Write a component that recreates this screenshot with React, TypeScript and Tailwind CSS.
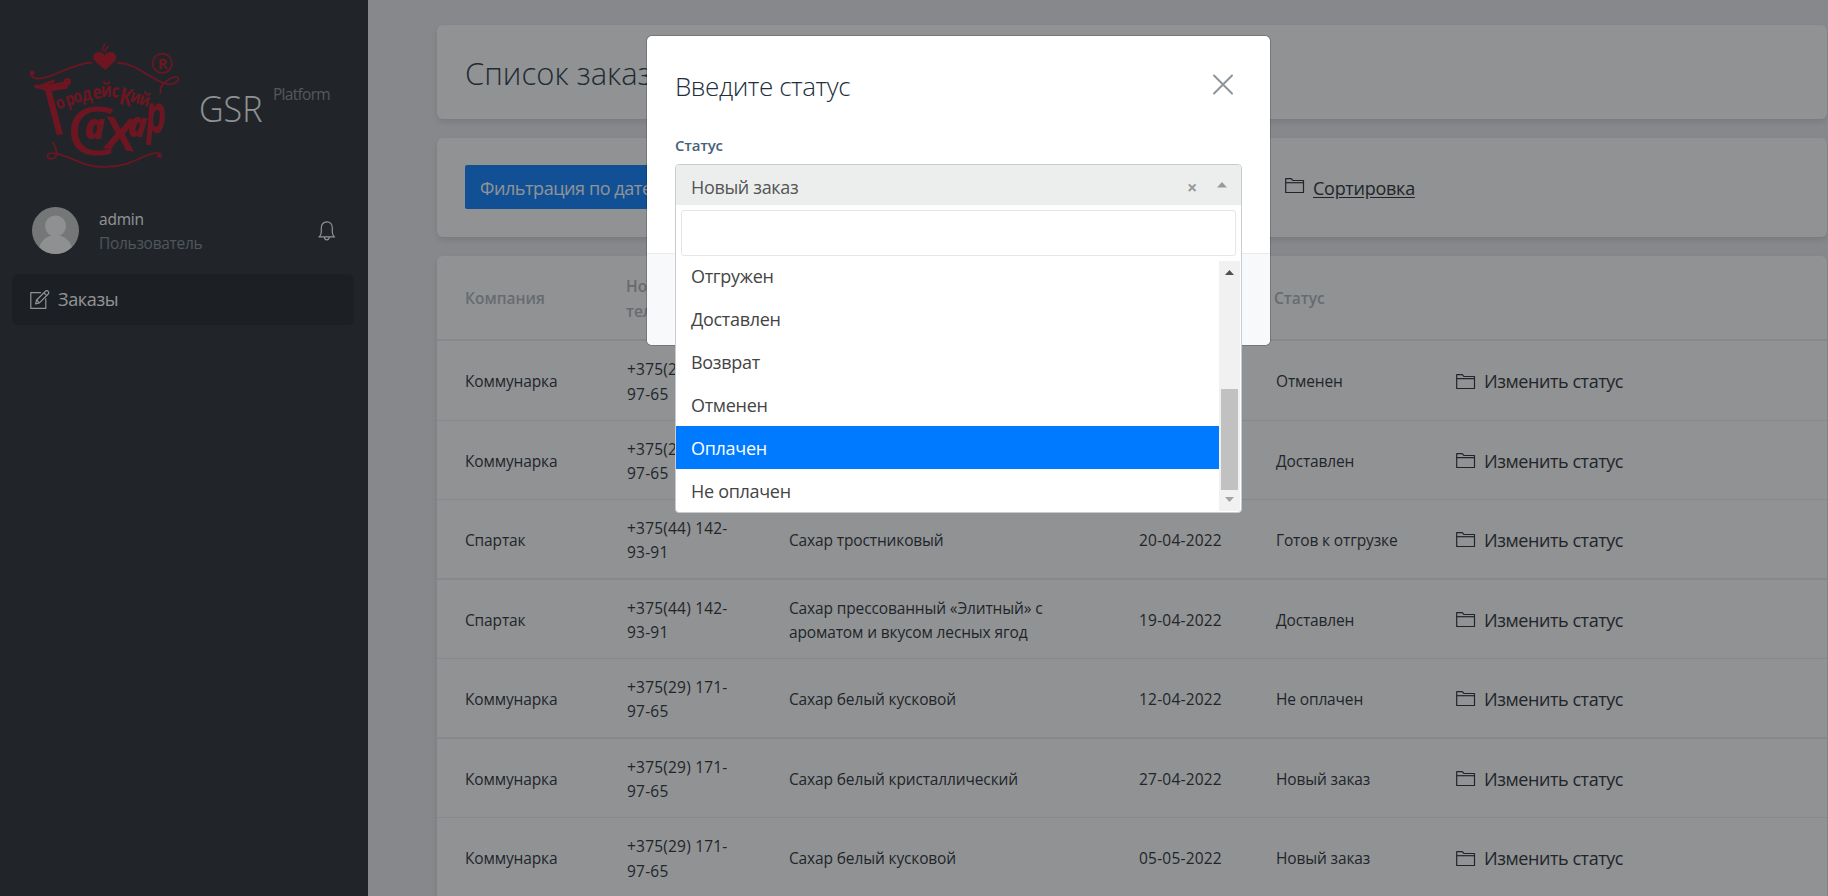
import React from "react";

type Order = {
  company: string;
  phone: string;
  product: string;
  date: string;
  status: string;
  row: string;
};

const orders: Order[] = [
  { company: "Коммунарка", phone: "+375(29) 171-97-65", product: "", date: "", status: "Отменен", row: "h-[80px] border-b" },
  { company: "Коммунарка", phone: "+375(29) 171-97-65", product: "", date: "", status: "Доставлен", row: "h-[79px] border-b" },
  { company: "Спартак", phone: "+375(44) 142-93-91", product: "Сахар тростниковый", date: "20-04-2022", status: "Готов к отгрузке", row: "h-[80px] border-b-2" },
  { company: "Спартак", phone: "+375(44) 142-93-91", product: "Сахар прессованный «Элитный» с ароматом и вкусом лесных ягод", date: "19-04-2022", status: "Доставлен", row: "h-[79px] border-b" },
  { company: "Коммунарка", phone: "+375(29) 171-97-65", product: "Сахар белый кусковой", date: "12-04-2022", status: "Не оплачен", row: "h-[80px] border-b-2" },
  { company: "Коммунарка", phone: "+375(29) 171-97-65", product: "Сахар белый кристаллический", date: "27-04-2022", status: "Новый заказ", row: "h-[79px] border-b" },
  { company: "Коммунарка", phone: "+375(29) 171-97-65", product: "Сахар белый кусковой", date: "05-05-2022", status: "Новый заказ", row: "h-[80px] border-b" },
];

const options = ["Отгружен", "Доставлен", "Возврат", "Отменен", "Оплачен", "Не оплачен"];

function FolderIcon() {
  return (
    <svg width="20" height="16" viewBox="0 0 20 16" fill="none" stroke="currentColor" strokeWidth="1.2" strokeLinejoin="round" className="shrink-0">
      <path d="M.7 14.5V.7h5.6l1.700 1.800h10.500v12z" />
      <path d="M.7 4.700h17.800" />
    </svg>
  );
}

function EditIcon() {
  return (
    <svg width="20" height="20" viewBox="0 0 20 20" fill="none" stroke="currentColor" strokeWidth="1.2" strokeLinejoin="round">
      <path d="M11 2.600H.8v15.800h15V8.600" />
      <path d="M5.600 13.800l1-3.800 8.900-8.700c.9-.9 2-.7 2.700 0s.9 1.800 0 2.700L9.400 12.800z" />
      <path d="M14 2.800l2.800 2.800M6.600 10l2.800 2.800" />
    </svg>
  );
}

function BellIcon() {
  return (
    <svg width="18" height="20" viewBox="0 0 18 20" fill="none" stroke="currentColor" strokeWidth="1.2" strokeLinejoin="round">
      <path d="M1 15.900c1.600-1.200 2.300-2.600 2.300-5V6.900C3.300 3.300 5.600.8 8.800.8s5.500 2.500 5.500 6.100v4c0 2.400.7 3.800 2.300 5z" />
      <path d="M6.300 16.200c.3 1.700 1.200 2.700 2.500 2.700s2.200-1 2.500-2.700" />
    </svg>
  );
}

const logoLetters = [
  { c: "о", x: 176, y: 268, r: -24, s: 52 },
  { c: "р", x: 203, y: 258, r: -18, s: 54 },
  { c: "о", x: 225, y: 249, r: -16, s: 52 },
  { c: "д", x: 249, y: 243, r: -10, s: 56 },
  { c: "е", x: 281, y: 236, r: -6, s: 56 },
  { c: "й", x: 303, y: 230, r: 0, s: 56 },
  { c: "с", x: 334, y: 230, r: 6, s: 56 },
  { c: "К", x: 355, y: 250, r: 12, s: 72 },
  { c: "и", x: 388, y: 243, r: 16, s: 54 },
  { c: "й", x: 415, y: 251, r: 18, s: 54 },
];

function Logo() {
  return (
    <svg width="155" height="129" viewBox="85 65 465 387" fill="none" stroke="#b90519" strokeLinecap="round" strokeLinejoin="round" className="overflow-visible">
      <g strokeWidth="5">
        <path d="M276 127c-70 4-112 48-160 48-20 0-25-12-20-20" />
        <path d="M354 127c60 4 90 44 140 62 24 9 48-6 41-17-9-9-30 6-40 15-12 10-15 20-12 31" />
        <path d="M165 400c60 8 75 40 150 40 85 0 115-42 158-42 8 0 12 5 11 12" />
        <path d="M165 400c-14-6-26 4-20 12 8 8 28 2 26-16-1-12-8-24-12-30" />
      </g>
      <circle cx="98" cy="158" r="7" fill="#b90519" stroke="none" />
      <circle cx="478" cy="406" r="6" fill="#b90519" stroke="none" />
      <circle cx="203" cy="184" r="11" fill="#b90519" stroke="none" />
      <path d="M108 198c16 2 28 4 38 12" strokeWidth="10" />
      <path d="M112 200c16-4 34-12 50-18" strokeWidth="8" />
      <path d="M317 150c-10-14-36-24-36-40 0-18 28-20 34-4 6-16 34-14 34 4 0 16-22 26-32 40z" fill="#b90519" stroke="none" />
      <path d="M310 92c-3-8 0-14 6-20M316 94c1-8 4-12 10-15" strokeWidth="4" />
      <circle cx="488" cy="129" r="29" strokeWidth="5" />
      <g fill="#b90519" stroke="none" className="font-['Open_Sans','Noto_Sans',sans-serif]">
        <text x="474" y="145" fontSize="44" fontWeight="700">R</text>
        <g fontWeight="700">
          {logoLetters.map((l) => (
            <text key={l.x} transform={`translate(${l.x} ${l.y}) rotate(${l.r}) scale(.8 1)`} fontSize={l.s}>
              {l.c}
            </text>
          ))}
        </g>
        <text transform="matrix(.76 -.14 .26 1 156 348)" fontSize="210" fontWeight="600">Г</text>
        <text transform="translate(200 404) scale(1.160 1)" fontSize="203" fontWeight="500">С</text>
        <text transform="translate(254 357) scale(.95 1)" fontSize="106" fontWeight="800" fontStyle="italic">а</text>
        <text transform="translate(308 384) rotate(6)" fontSize="178" fontWeight="600">х</text>
        <text transform="translate(382 346) rotate(6) scale(.85 1)" fontSize="106" fontWeight="800" fontStyle="italic">а</text>
        <text transform="translate(434 334) rotate(5) scale(.6 1)" fontSize="158" fontWeight="700">р</text>
      </g>
    </svg>
  );
}

function Sidebar() {
  return (
    <aside className="flex h-full w-[368px] shrink-0 flex-col bg-[#212529] text-white">
      <div className="flex h-[207px] items-start pt-[42px] pl-[28px]">
        <Logo />
        <div className="flex items-start pt-[40px] pl-[16px]">
          <span className="inline-block origin-left scale-x-[0.92] text-[37px] leading-[52px] font-light">GSR</span>
          <span className="pt-px pl-[5px] text-[15.500px] leading-[22px] tracking-[-0.7px] text-[#868a8e]">Platform</span>
        </div>
      </div>
      <div className="flex h-[47px] items-center pr-[32px] pl-[32px]">
        <svg width="47" height="47" viewBox="0 0 47 47">
          <clipPath id="avatar">
            <circle cx="23.500" cy="23.500" r="23.500" />
          </clipPath>
          <g clipPath="url(#avatar)">
            <rect width="47" height="47" fill="#c8c7c5" />
            <circle cx="23.500" cy="19" r="10.500" fill="#fdfbf9" />
            <ellipse cx="23.500" cy="45" rx="17" ry="17" fill="#fdfbf9" />
          </g>
        </svg>
        <div className="flex flex-1 flex-col pl-[20px] text-[15.500px] leading-[24px]">
          <span className="tracking-[-0.2px]">admin</span>
          <span className="tracking-[-0.3px] text-[#7f858a]">Пользователь</span>
        </div>
        <BellIcon />
      </div>
      <nav className="mt-[20px] mr-[14px] ml-[12px] flex h-[51px] items-center rounded-[6px] bg-[#17191d] pl-[18px]">
        <EditIcon />
        <span className="pl-[8px] text-[18px] tracking-[-0.35px]">Заказы</span>
      </nav>
    </aside>
  );
}

function Orders() {
  const cols = "grid grid-cols-[162px_162px_350px_137px_180px_1fr] items-center pl-[28px]";
  return (
    <section className="h-[700px] shrink-0 overflow-hidden rounded-[6px] bg-white shadow-[0_3px_6px_rgba(0,0,0,0.12)]">
      <div className={cols + " h-[85px] border-b-2 border-[#e9ebee] pt-[2px] text-[15.500px] leading-[25px] font-semibold text-[#adb1b6]"}>
        <span>Компания</span>
        <span className="-ml-px w-[100px]">Номер телефона</span>
        <span />
        <span />
        <span className="-ml-[2px]">Статус</span>
        <span />
      </div>
      {orders.map((o, i) => (
        <div key={i} className={cols + " border-[#e9ebee] pt-[2px] text-[15.500px] leading-[24.500px] tracking-[-0.140px] " + o.row}>
          <span>{o.company}</span>
          <span className="w-[115px] tracking-[0.200px]">{o.phone}</span>
          <span className="w-[280px]">{o.product}</span>
          <span className="tracking-[0.200px]">{o.date}</span>
          <span>{o.status}</span>
          <span className="flex items-center gap-[8px] text-[18px] tracking-[-0.430px]">
            <FolderIcon />
            Изменить статус
          </span>
        </div>
      ))}
    </section>
  );
}

function StatusModal() {
  return (
    <div className="absolute top-[36px] left-[647px] flex h-[309px] w-[623px] flex-col rounded-[5px] bg-white shadow-[0_0_0_1px_rgba(0,0,0,0.18)]">
      <div className="flex items-center justify-between pt-[32px] pr-[36px] pl-[28px]">
        <h2 className="text-[26px] leading-[36px] font-light tracking-[-0.45px] text-[#212f3d]">Введите статус</h2>
        <svg width="22" height="22" viewBox="0 0 22 22" stroke="#8d959c" strokeWidth="2" strokeLinecap="round" className="-mt-[3px]">
          <path d="M2 1.500l18 18M20 1.500l-18 18" />
        </svg>
      </div>
      <label className="mt-[29px] pl-[28px] text-[15px] leading-[24px] font-semibold tracking-[-0.200px] text-[#475f7b]">Статус</label>
      <div className="mt-auto h-[92px] rounded-b-[5px] border-t border-[#e9ecef] bg-[#f8f9fb]" />
      <div className="absolute top-[128px] left-[28px] flex h-[349px] w-[567px] flex-col rounded-[4px] border border-[#c8cbcd] bg-white text-[18px] tracking-[-0.300px]">
        <div className="flex h-[40px] shrink-0 items-center rounded-t-[3px] bg-[#eceeed] pt-[5px] pl-[15px] text-[#555]">
          <span className="flex-1 tracking-[-0.350px]">Новый заказ</span>
          <span className="text-[18px] font-bold text-[#999]">×</span>
          <svg width="10" height="6" viewBox="0 0 10 6" className="mt-[-5px] mr-[14px] ml-[20px]">
            <path d="M0 5.500L5 0l5 5.500z" fill="#999" />
          </svg>
        </div>
        <div className="mx-[5px] mt-[5px] h-[46px] shrink-0 rounded-[3px] border border-[#e4e7ea]" />
        <div className="mt-[5px] mr-px mb-px flex h-[250px] overflow-hidden">
          <ul className="-mt-[7px] flex-1 text-[#444]">
            {options.map((o) => (
              <li key={o} className={"flex h-[43px] items-center pt-px pl-[15px] " + (o === "Оплачен" ? "bg-[#007bff] text-white" : "")}>
                {o}
              </li>
            ))}
          </ul>
          <div className="flex w-[21px] flex-col items-center bg-[#f1f1f1]">
            <svg width="9" height="5" viewBox="0 0 9 5" className="mt-[9px]">
              <path d="M0 5l4.500-5L9 5z" fill="#505050" />
            </svg>
            <div className="mt-[114px] h-[101px] w-[17px] bg-[#c1c1c1]" />
            <svg width="9" height="5" viewBox="0 0 9 5" className="mt-[7px]">
              <path d="M0 0l4.500 5L9 0z" fill="#a3a3a3" />
            </svg>
          </div>
        </div>
      </div>
    </div>
  );
}

export default function App() {
  return (
    <div className="relative flex h-[896px] w-full overflow-hidden bg-[#ebebef] font-['Open_Sans','Noto_Sans',sans-serif] text-[#212529]">
      <Sidebar />
      <main className="flex flex-1 flex-col gap-[19px] pt-[25px] pr-px pl-[69px]">
        <section className="flex h-[94px] shrink-0 items-center rounded-[6px] bg-white pt-[3px] pl-[28px] shadow-[0_3px_6px_rgba(0,0,0,0.12)]">
          <h1 className="text-[31px] font-light text-[#212f3d]">Список заказов</h1>
        </section>
        <section className="flex h-[99px] shrink-0 items-center rounded-[6px] bg-white pl-[28px] shadow-[0_3px_6px_rgba(0,0,0,0.12)]">
          <button className="mt-[-1px] h-[44px] w-[200px] rounded-[2px] bg-[#007bff] pt-[2px] pl-[15px] text-left text-[18px] tracking-[-0.420px] whitespace-nowrap text-white">Фильтрация по дате</button>
          <span className="ml-[620px] flex items-center gap-[8px] pt-[2px] text-[18px] tracking-[-0.270px]">
            <span className="mb-[6px]">
              <FolderIcon />
            </span>
            <span className="underline underline-offset-2">Сортировка</span>
          </span>
        </section>
        <Orders />
      </main>
      <div className="absolute inset-0 bg-[#212529]/50" />
      <StatusModal />
    </div>
  );
}
